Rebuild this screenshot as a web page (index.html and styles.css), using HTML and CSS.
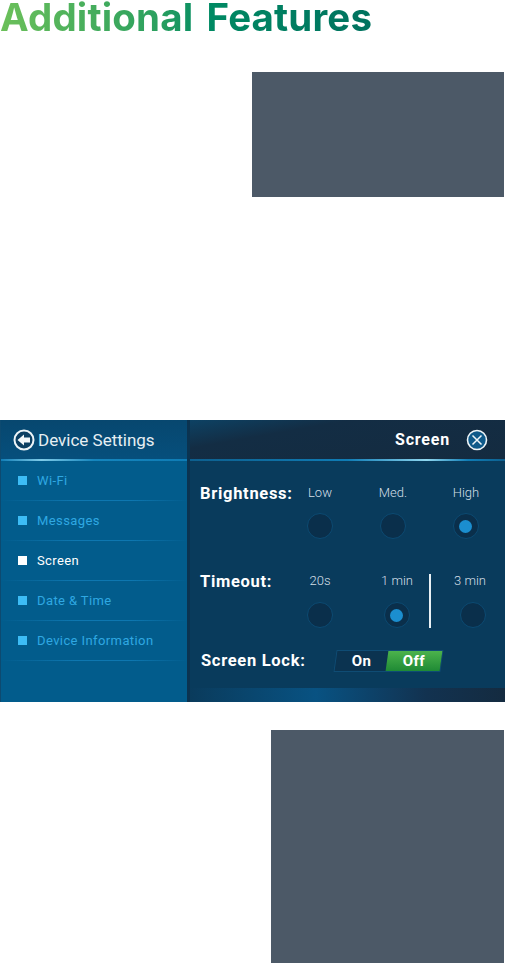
FILE: index.html
```html
<!DOCTYPE html>
<html lang="en">
<head>
    <meta charset="UTF-8">
    <meta name="viewport" content="width=device-width, initial-scale=1.0">
    <title>Additional Features</title>
    <link rel="stylesheet" href="styles.css">
</head>
<body>
    <h1 class="page-title">Additional Features</h1>
    <div class="placeholder placeholder-top"></div>

    <div class="device">
        <aside class="sidebar">
            <div class="sidebar-head">
                <svg class="back-icon" width="22" height="22" viewBox="0 0 22 22">
                    <circle cx="11" cy="11" r="9.5" fill="#0c3f62" stroke="#eef5f8" stroke-width="2"/>
                    <path d="M4.5 11 L11 5.5 V8.5 H17 V13.5 H11 V16.5 Z" fill="#f4f8fa"/>
                </svg>
                <span>Device Settings</span>
            </div>
            <ul class="menu">
                <li class="menu-item">Wi-Fi</li>
                <li class="menu-item">Messages</li>
                <li class="menu-item active">Screen</li>
                <li class="menu-item">Date &amp; Time</li>
                <li class="menu-item">Device Information</li>
            </ul>
        </aside>
        <main class="screen">
            <div class="screen-head">
                <span class="screen-title">Screen</span>
                <svg class="close-icon" width="22" height="22" viewBox="0 0 22 22">
                    <circle cx="11" cy="11" r="9.5" fill="#0f5a8a" stroke="#eef5f8" stroke-width="1.6"/>
                    <path d="M6.5 6.5 L15.5 15.5 M15.5 6.5 L6.5 15.5" stroke="#eef5f8" stroke-width="1.5"/>
                </svg>
            </div>
            <section class="setting brightness">
                <h2 class="setting-label">Brightness:</h2>
                <div class="option"><span>Low</span><i class="radio"></i></div>
                <div class="option"><span>Med.</span><i class="radio"></i></div>
                <div class="option"><span>High</span><i class="radio on"></i></div>
            </section>
            <section class="setting timeout">
                <h2 class="setting-label">Timeout:</h2>
                <div class="option"><span>20s</span><i class="radio"></i></div>
                <div class="option"><span>1 min</span><i class="radio on"></i></div>
                <div class="option"><span class="shift-left">3 min</span><i class="radio"></i></div>
                <b class="rule"></b>
            </section>
            <section class="lock">
                <h2 class="setting-label">Screen Lock:</h2>
                <div class="toggle">
                    <span class="toggle-on"><em>On</em></span>
                    <span class="toggle-off"><em>Off</em></span>
                </div>
            </section>
            <div class="screen-foot"></div>
        </main>
    </div>

    <div class="placeholder placeholder-bottom"></div>
</body>
</html>
```

FILE: styles.css
```css
body {
  margin: 0;
  background-color: #ffffff;
  font-family: Roboto, "Liberation Sans", sans-serif;
  overflow: hidden;
}

.page-title {
  margin: 0;
  height: 72px;
  width: 376px;
  box-sizing: border-box;
  font-family: Inter, Lato, sans-serif;
  font-weight: 700;
  font-size: 38.5px;
  line-height: 34px;
  letter-spacing: 0.15px;
  word-spacing: 4px;
  white-space: nowrap;
  background: linear-gradient(90deg, #6cc05a 0%, #2ba05f 42%, #008a63 55%, #00715f 100%);
  -webkit-background-clip: text;
  background-clip: text;
  color: transparent;
}

.placeholder {
  background-color: #4c5967;
}

.placeholder-top {
  width: 252px;
  height: 125px;
  margin-left: 252px;
}

.placeholder-bottom {
  width: 233px;
  height: 233px;
  margin: 28px 0 0 271px;
}

/* Device panel */
.device {
  display: flex;
  height: 282px;
  margin-top: 223px;
  color: #ffffff;
}

.sidebar {
  flex: 0 0 187px;
  box-sizing: border-box;
  border-left: 1px solid #0d4a70;
  background-color: #025c8c;
}

.sidebar-head {
  display: flex;
  align-items: center;
  gap: 3px;
  height: 39px;
  padding-left: 12px;
  font-size: 17px;
  color: #e6eff3;
  background: linear-gradient(180deg, #07476f, #064f7c);
  border-bottom: 2px solid;
  border-image: linear-gradient(90deg, #0f7cb5, #7fcbe8 22%, #1585bd 50%, #0f7cb5) 1;
}

.menu {
  margin: 0;
  padding: 0;
  list-style: none;
}

.menu-item {
  display: flex;
  align-items: center;
  gap: 10px;
  height: 39px;
  padding-left: 17px;
  font-size: 13px;
  letter-spacing: 0.4px;
  color: #2fa8e2;
  border-bottom: 1px solid;
  border-image: linear-gradient(90deg, #025c8c, #0e77b0 40%, #0e77b0 70%, #025c8c) 1;
}

.menu-item::before {
  content: "";
  width: 9px;
  height: 9px;
  background-color: #3dbcf5;
}

.menu-item.active {
  color: #ffffff;
}

.menu-item.active::before {
  background-color: #ffffff;
}

.screen {
  flex: 1;
  min-width: 0;
  display: flex;
  flex-direction: column;
  border-left: 3px solid #0b3350;
  background-color: #093b5c;
}

.screen-head {
  display: flex;
  align-items: center;
  justify-content: flex-end;
  gap: 16px;
  height: 39px;
  padding-right: 17px;
  background: linear-gradient(170deg, #0d4264 0%, #132d44 30%, #142b40 100%);
  border-bottom: 2px solid;
  border-image: linear-gradient(90deg, #0d5f8e, #0f7cb5 50%, #8fd6ef 75%, #0f7cb5 88%, #0d5f8e) 1;
}

.screen-title {
  font-weight: 700;
  font-size: 16px;
  letter-spacing: 0.8px;
}

.setting {
  position: relative;
  display: grid;
  justify-items: center;
  height: 64px;
  padding-top: 24px;
}

.brightness {
  grid-template-columns: 93.5px 73px 73px 73px;
}

.timeout {
  grid-template-columns: 93.5px 73px 81px 71px;
}

.setting-label {
  margin: 0;
  font-size: 16.5px;
  font-weight: 700;
  letter-spacing: 0.7px;
  line-height: 18px;
  justify-self: start;
  padding-left: 10px;
  white-space: nowrap;
}

.option {
  display: flex;
  flex-direction: column;
  align-items: center;
  gap: 12px;
  font-size: 13px;
  font-weight: 300;
  line-height: 16px;
  color: #d3dfe6;
}

.timeout .option {
  gap: 13px;
}

.shift-left {
  margin-right: 6px;
}

.radio {
  display: flex;
  align-items: center;
  justify-content: center;
  box-sizing: border-box;
  width: 26px;
  height: 26px;
  border: 1px solid #0c4a72;
  border-radius: 50%;
  background-color: #0a2f4b;
}

.radio.on::after {
  content: "";
  width: 13px;
  height: 13px;
  border-radius: 50%;
  background-color: #1b8ecf;
}

.rule {
  position: absolute;
  left: 239px;
  top: 25px;
  width: 2px;
  height: 54px;
  background-color: #e8f0f4;
}

.lock {
  display: flex;
  align-items: center;
  height: 34px;
  margin-top: 7px;
}

.lock .setting-label {
  padding-left: 11px;
  width: 145px;
  box-sizing: border-box;
}

.toggle {
  display: flex;
  align-items: center;
  width: 107px;
  height: 22px;
  font-size: 15px;
  font-weight: 700;
  letter-spacing: 0.4px;
  background-color: #0b3350;
  border: 1px solid #0f4c74;
  box-sizing: border-box;
  transform: skewX(-8deg);
}

.toggle em {
  display: block;
  font-style: normal;
  transform: skewX(8deg);
}

.toggle-on {
  width: 51px;
  text-align: center;
}

.toggle-off {
  width: 54px;
  height: 20px;
  line-height: 20px;
  text-align: center;
  background: linear-gradient(180deg, #4cb34c, #1f8a35);
}

.screen-foot {
  margin-top: auto;
  height: 14px;
  background: linear-gradient(90deg, #0a3b5c 0%, #085282 40%, #123250 75%, #142b40 100%);
}
```
